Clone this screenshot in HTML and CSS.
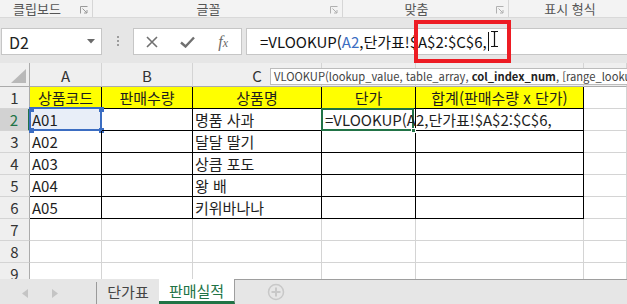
FILE: index.html
```html
<!DOCTYPE html>
<html lang="ko">
<head>
    <meta charset="UTF-8">
    <meta name="viewport" content="width=device-width, initial-scale=1.0">
    <title>판매실적</title>
    <link rel="stylesheet" href="styles.css">
</head>
<body>
<div class="window">

    <!-- ribbon group captions -->
    <div class="ribbon">
        <div class="group g-clip">
            <span class="group-label">클립보드</span>
            <svg class="launcher" viewBox="0 0 8 8"><path d="M0.5 7.5V0.5H7.5" fill="none" stroke="#9a9a9a"/><path d="M2.5 2.5L7 7M7 4V7H4" fill="none" stroke="#9a9a9a"/></svg>
        </div>
        <div class="group g-font">
            <span class="group-label">글꼴</span>
            <svg class="launcher" viewBox="0 0 8 8"><path d="M0.5 7.5V0.5H7.5" fill="none" stroke="#b0b0b0"/><path d="M2.5 2.5L7 7M7 4V7H4" fill="none" stroke="#b0b0b0"/></svg>
        </div>
        <div class="group g-align">
            <span class="group-label">맞춤</span>
            <svg class="launcher" viewBox="0 0 8 8"><path d="M0.5 7.5V0.5H7.5" fill="none" stroke="#b0b0b0"/><path d="M2.5 2.5L7 7M7 4V7H4" fill="none" stroke="#b0b0b0"/></svg>
        </div>
        <div class="group g-num">
            <span class="group-label">표시 형식</span>
        </div>
    </div>

    <!-- name box + formula bar -->
    <div class="formula-zone">
        <div class="name-box">
            <span>D2</span>
            <svg width="8" height="5" viewBox="0 0 8 5"><path d="M0 0H8L4 4.5Z" fill="#6a6a6a"/></svg>
        </div>
        <div class="grip">
            <span class="dot"></span><span class="dot"></span><span class="dot"></span>
        </div>
        <div class="fx-buttons">
            <span class="fx-btn">
                <svg width="12" height="12" viewBox="0 0 12 12"><path d="M1 1L11 11M11 1L1 11" stroke="#707070" stroke-width="1.6"/></svg>
            </span>
            <span class="fx-btn">
                <svg width="15" height="12" viewBox="0 0 15 12"><path d="M1 6.5L5.5 10.5L14 1.5" fill="none" stroke="#707070" stroke-width="2.4"/></svg>
            </span>
            <span class="fx-btn fx-label"><i>f</i><i class="small">x</i></span>
        </div>
        <div class="formula-input">
            <span>=VLOOKUP(</span><span class="ref">A2</span><span>,단가표!$A$2:$C$6,</span><span class="caret"></span>
        </div>
    </div>

    <!-- worksheet -->
    <div class="sheet">
        <div class="corner"><svg width="15" height="14" viewBox="0 0 15 14"><path d="M15 0V14H0Z" fill="#b9b9b9"/></svg></div>
        <div class="ch">A</div>
        <div class="ch">B</div>
        <div class="ch">C</div>
        <div class="ch">D</div>
        <div class="ch">E</div>
        <div class="ch"></div>

        <div class="rh">1</div>
        <div class="cell t y c">상품코드</div>
        <div class="cell t y c">판매수량</div>
        <div class="cell t y c">상품명</div>
        <div class="cell t y c">단가</div>
        <div class="cell t y c">합계(판매수량 x 단가)</div>
        <div class="cell"></div>

        <div class="rh rh-on">2</div>
        <div class="cell t ref-cell">A01
            <span class="ref-box"></span>
            <span class="knob k-tl"></span><span class="knob k-tr"></span>
            <span class="knob k-bl"></span><span class="knob k-br"></span>
        </div>
        <div class="cell t"></div>
        <div class="cell t">명품 사과</div>
        <div class="cell t spill">
            <span class="spill-text">=VLOOKUP(A2,단가표!$A$2:$C$6,</span>
            <span class="active-box"></span>
            <span class="fill-handle"></span>
        </div>
        <div class="cell t"></div>
        <div class="cell"></div>

        <div class="rh">3</div>
        <div class="cell t">A02</div>
        <div class="cell t"></div>
        <div class="cell t">달달 딸기</div>
        <div class="cell t"></div>
        <div class="cell t"></div>
        <div class="cell"></div>

        <div class="rh">4</div>
        <div class="cell t">A03</div>
        <div class="cell t"></div>
        <div class="cell t">상큼 포도</div>
        <div class="cell t"></div>
        <div class="cell t"></div>
        <div class="cell"></div>

        <div class="rh">5</div>
        <div class="cell t">A04</div>
        <div class="cell t"></div>
        <div class="cell t">왕 배</div>
        <div class="cell t"></div>
        <div class="cell t"></div>
        <div class="cell"></div>

        <div class="rh">6</div>
        <div class="cell t">A05</div>
        <div class="cell t"></div>
        <div class="cell t">키위바나나</div>
        <div class="cell t"></div>
        <div class="cell t"></div>
        <div class="cell"></div>

        <div class="rh">7</div>
        <div class="cell"></div><div class="cell"></div><div class="cell"></div>
        <div class="cell"></div><div class="cell"></div><div class="cell"></div>

        <div class="rh">8</div>
        <div class="cell"></div><div class="cell"></div><div class="cell"></div>
        <div class="cell"></div><div class="cell"></div><div class="cell"></div>

        <div class="rh">9</div>
        <div class="cell"></div><div class="cell"></div><div class="cell"></div>
        <div class="cell"></div><div class="cell"></div><div class="cell"></div>
    </div>

    <!-- sheet tabs -->
    <div class="tab-bar">
        <div class="tab-nav">
            <svg width="6" height="9" viewBox="0 0 6 9"><path d="M6 0V9L0 4.5Z" fill="#c4c4c4"/></svg>
            <svg width="6" height="9" viewBox="0 0 6 9"><path d="M0 0V9L6 4.5Z" fill="#c4c4c4"/></svg>
        </div>
        <div class="tab">단가표</div>
        <div class="tab tab-active">판매실적</div>
        <div class="tab-rest">
            <svg class="add-sheet" width="18" height="18" viewBox="0 0 18 18"><circle cx="9" cy="9" r="7.5" fill="none" stroke="#c8c8c8" stroke-width="1.5"/><path d="M9 4.5V13.5M4.5 9H13.5" stroke="#c8c8c8" stroke-width="2"/></svg>
        </div>
    </div>

    <!-- things drawn over the rest -->
    <div class="tooltip">VLOOKUP(lookup_value, table_array, <b>col_index_num</b>, [range_lookup])</div>
    <div class="callout"></div>
    <svg class="ibeam" width="9" height="16" viewBox="0 0 9 16"><path d="M1 0.5H3.5Q4.5 0.5 4.5 1.5V14.5Q4.5 15.5 3.5 15.5H1M8 0.5H5.5Q4.5 0.5 4.5 1.5M8 15.5H5.5Q4.5 15.5 4.5 14.5" fill="none" stroke="#111" stroke-width="1.2"/></svg>
</div>
</body>
</html>
```

FILE: styles.css
```css
* {
    box-sizing: border-box;
}

body {
    margin: 0;
    font-family: "Noto Sans CJK KR", "Noto Sans", sans-serif;
    color: #1e1e1e;
    background: #fff;
}

.window {
    position: relative;
    width: 627px;
    height: 304px;
    overflow: hidden;
}

/* ribbon captions */
.ribbon {
    display: flex;
    height: 18px;
    background: #f3f3f3;
    border-bottom: 1px solid #d9d9d9;
}

.group {
    display: flex;
    align-items: center;
    height: 17px;
    border-right: 1px solid #d6d6d6;
}

.g-clip { width: 93px; }
.g-font { width: 250px; }
.g-align { width: 166px; }
.g-num { flex: 1; border-right: none; }

.group-label {
    flex: 1;
    text-align: center;
    font-size: 13px;
    line-height: 16px;
    color: #555;
    padding-right: 6px;
}

.g-num .group-label {
    padding-right: 0;
    padding-left: 4px;
}

.launcher {
    width: 8px;
    height: 8px;
    margin-right: 4px;
    margin-top: 2px;
}

/* formula bar */
.formula-zone {
    display: flex;
    align-items: flex-start;
    height: 45px;
    padding: 10px 0 0 1px;
    background: #e6e6e6;
}

.name-box {
    display: flex;
    align-items: center;
    justify-content: space-between;
    width: 101px;
    height: 27px;
    padding: 0 6px 0 7px;
    background: #fff;
    border: 1px solid #c6c6c6;
    font-size: 16px;
    color: #222;
}

.grip {
    display: flex;
    flex-direction: column;
    align-items: center;
    gap: 2px;
    width: 31px;
    padding-top: 8px;
}

.dot {
    width: 2px;
    height: 2px;
    background: #9c9c9c;
}

.fx-buttons {
    display: grid;
    grid-template-columns: repeat(3, 1fr);
    align-items: center;
    width: 109px;
    height: 27px;
    background: #fff;
    border: 1px solid #c6c6c6;
}

.fx-btn {
    display: flex;
    justify-content: center;
    align-items: center;
}

.fx-label {
    font-family: "Liberation Serif", serif;
    font-size: 16px;
    color: #6a6a6a;
}

.fx-label .small {
    font-size: 12px;
    margin-top: 3px;
}

.formula-input {
    flex: 1;
    display: flex;
    align-items: center;
    height: 27px;
    margin-left: 4px;
    padding-left: 13px;
    background: #fff;
    border: 1px solid #c6c6c6;
    border-right: none;
    font-size: 15px;
    white-space: nowrap;
    color: #111;
}

.formula-input .ref {
    color: #3b6dc2;
}

.caret {
    display: inline-block;
    width: 1px;
    height: 19px;
    margin-left: 1px;
    background: #111;
}

/* worksheet grid */
.sheet {
    display: grid;
    grid-template-columns: 30px 72px 91px 129px 94px 168px 1fr;
    grid-template-rows: 24px repeat(9, 22px);
    height: 216px;
    overflow: hidden;
}

.corner {
    display: flex;
    align-items: flex-end;
    justify-content: flex-end;
    padding: 0 3px 3px 0;
    background: #efefef;
    border-right: 1px solid #ababab;
    border-bottom: 1px solid #ababab;
}

.ch {
    display: flex;
    justify-content: center;
    align-items: center;
    padding-top: 2px;
    background: #efefef;
    border-right: 1px solid #d4d4d4;
    border-bottom: 1px solid #ababab;
    font-size: 15px;
    color: #333;
}

.rh {
    display: flex;
    justify-content: center;
    align-items: center;
    background: #efefef;
    border-right: 1px solid #ababab;
    border-bottom: 1px solid #d4d4d4;
    font-size: 15px;
    color: #333;
}

.rh-on {
    background: #d2d2d2;
    color: #217346;
    border-right: 2px solid #217346;
}

.cell {
    position: relative;
    display: flex;
    align-items: center;
    padding: 0 2px;
    border-right: 1px solid #d4d4d4;
    border-bottom: 1px solid #d4d4d4;
    font-size: 15px;
    white-space: nowrap;
    overflow: hidden;
}

.cell.t {
    border-right-color: #000;
    border-bottom-color: #000;
}

.cell.y {
    background: #ffff00;
}

.cell.c {
    justify-content: center;
}

/* referenced range A2 */
.ref-cell {
    overflow: visible;
    background: #e8eef8;
}

.ref-box {
    position: absolute;
    left: -1px;
    top: -2px;
    right: -1px;
    bottom: -1px;
    border: 2px solid #3b6dc2;
}

.knob {
    position: absolute;
    width: 5px;
    height: 5px;
    background: #3b6dc2;
}

.k-tl { left: -1px; top: -2px; }
.k-tr { right: -3px; top: -2px; }
.k-bl { left: -1px; bottom: -3px; }
.k-br { right: -3px; bottom: -3px; }

/* active cell D2, text spills into E2 */
.spill {
    overflow: visible;
    z-index: 2;
    padding-left: 3px;
}

.spill-text {
    position: relative;
    z-index: 3;
}

.active-box {
    position: absolute;
    left: -1px;
    top: -1px;
    right: 1px;
    bottom: -1px;
    border: 2px solid #217346;
}

.fill-handle {
    position: absolute;
    right: -1px;
    bottom: -3px;
    width: 5px;
    height: 5px;
    background: #217346;
    border: 1px solid #fff;
    z-index: 4;
}

/* sheet tabs */
.tab-bar {
    display: flex;
    height: 25px;
    background: #e6e6e6;
}

.tab-nav {
    display: flex;
    align-items: center;
    gap: 24px;
    width: 97px;
    padding-left: 22px;
    border-right: 1px solid #9a9a9a;
    margin-top: 3px;
}

.tab {
    display: flex;
    justify-content: center;
    align-items: center;
    width: 62px;
    font-size: 15px;
    color: #444;
    padding-bottom: 1px;
}

.tab-active {
    width: 76px;
    background: #fff;
    color: #217346;
    border-right: 1px solid #9e9e9e;
    border-bottom: 3px solid #217346;
    padding-bottom: 0;
}

.tab-rest {
    flex: 1;
    display: flex;
    align-items: center;
    padding-left: 32px;
    border-top: 1px solid #9e9e9e;
}

/* overlays */
.tooltip {
    position: absolute;
    left: 270px;
    top: 68px;
    height: 17px;
    padding: 0 3px;
    background: #fff;
    border: 1px solid #bcbcbc;
    font-size: 11.2px;
    line-height: 15px;
    color: #444;
    white-space: nowrap;
}

.tooltip b {
    color: #222;
}

.callout {
    position: absolute;
    left: 414px;
    top: 20px;
    width: 97px;
    height: 43px;
    border: 4px solid #ed1c24;
}

.ibeam {
    position: absolute;
    left: 490px;
    top: 31px;
}
```
